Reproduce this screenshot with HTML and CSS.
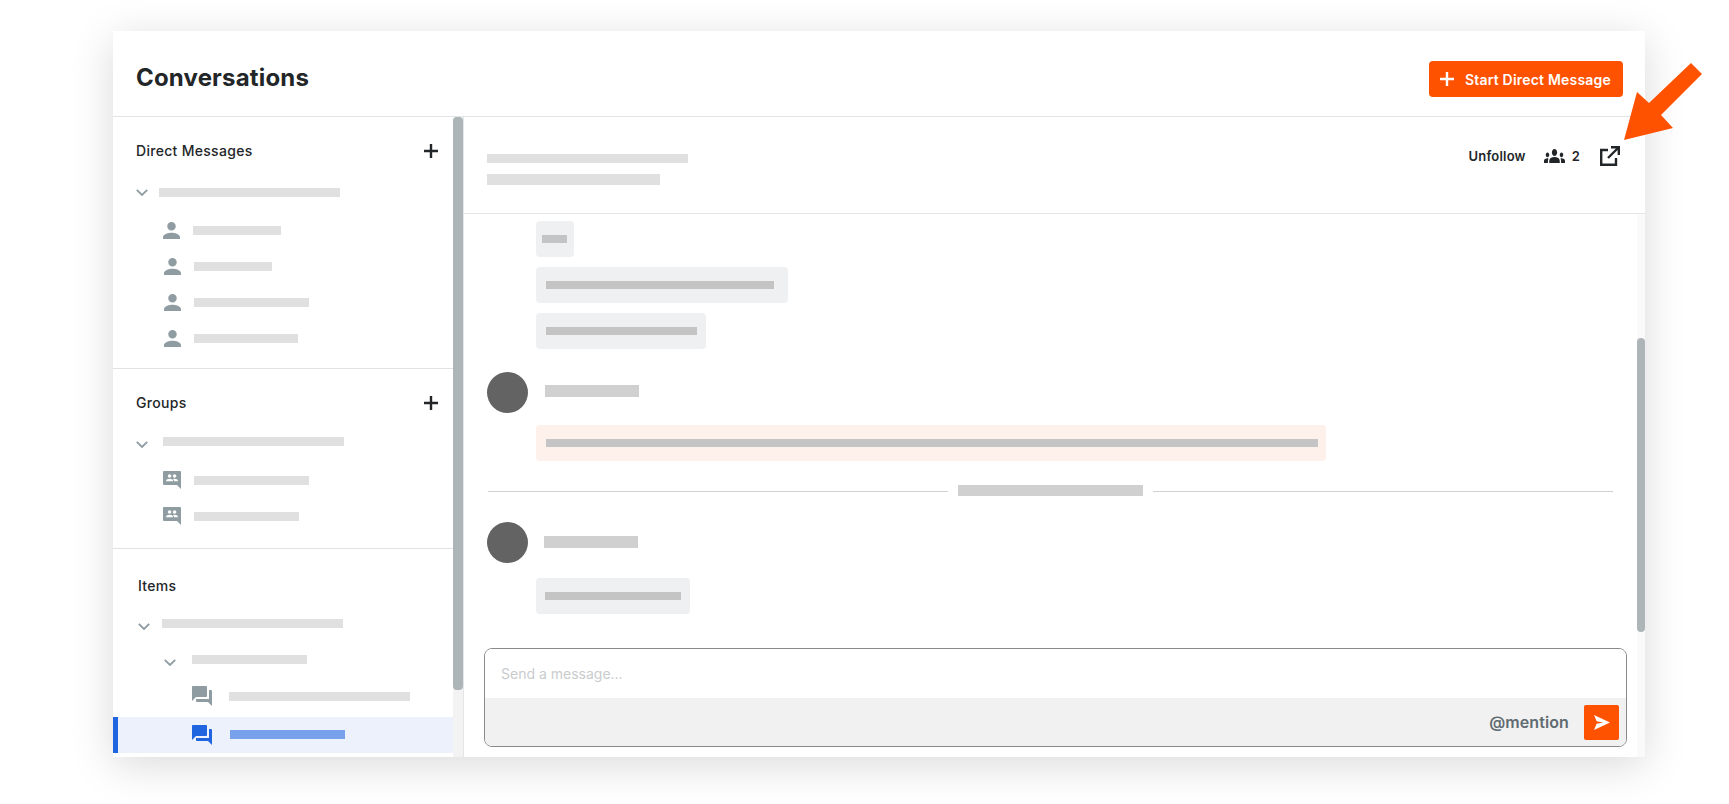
FILE: index.html
```html
<!DOCTYPE html>
<html lang="en">
<head>
    <meta charset="UTF-8">
    <meta name="viewport" content="width=device-width, initial-scale=1.0">
    <title>Conversations</title>
    <link rel="stylesheet" href="styles.css">
</head>
<body>
    <svg width="0" height="0" class="defs">
        <symbol id="chevron" viewBox="0 0 12 7"><path d="M.8.8 6 6l5.2-5.2" fill="none" stroke="currentColor" stroke-width="1.8"/></symbol>
        <symbol id="plus" viewBox="0 0 14 14"><path d="M7 0v14M0 7h14" fill="none" stroke="currentColor" stroke-width="2.4"/></symbol>
        <symbol id="person" viewBox="4 4 16 16"><path fill="currentColor" d="M12 12c2.21 0 4-1.79 4-4s-1.79-4-4-4-4 1.79-4 4 1.79 4 4 4zm0 2c-2.67 0-8 1.34-8 4v2h16v-2c0-2.66-5.33-4-8-4z"/></symbol>
        <symbol id="group-chat" viewBox="0 0 18 18">
            <path fill="currentColor" d="M1 0h16a1 1 0 0 1 1 1v17l-4-4H1a1 1 0 0 1-1-1V1a1 1 0 0 1 1-1z"/>
            <circle cx="6.6" cy="5" r="1.8" fill="#fff"/>
            <circle cx="11.6" cy="5" r="1.8" fill="#fff"/>
            <path fill="#fff" d="M3 10.2c0-1.6 2-2.4 3.6-2.4s3.5.8 3.5 2.4zM11 10.2c0-1-.4-1.8-1.1-2.3.6-.1 1.2-.2 1.8-.2 1.5 0 3.4.8 3.4 2.5z"/>
        </symbol>
        <symbol id="forum" viewBox="2 2 20 20"><path fill="currentColor" d="M21 6h-2v9H6v2c0 .55.45 1 1 1h11l4 4V7c0-.55-.45-1-1-1zm-4 6V3c0-.55-.45-1-1-1H3c-.55 0-1 .45-1 1v14l4-4h10c.55 0 1-.45 1-1z"/></symbol>
    </svg>

    <div class="card">
        <header class="top">
            <h1>Conversations</h1>
            <button class="btn-start">
                <svg class="btn-plus"><use href="#plus"/></svg>
                Start Direct Message
            </button>
        </header>

        <div class="main">
            <aside class="sidebar">
                <div class="side-list">
                    <section class="side-section dm">
                        <div class="side-head">
                            <h2>Direct Messages</h2>
                            <svg class="add"><use href="#plus"/></svg>
                        </div>
                        <div class="row row-parent">
                            <svg class="chev"><use href="#chevron"/></svg>
                            <span class="bar bar-side w181"></span>
                        </div>
                        <div class="row row-child row-first">
                            <svg class="ico-person"><use href="#person"/></svg>
                            <span class="bar bar-side w88"></span>
                        </div>
                        <div class="row row-child">
                            <svg class="ico-person"><use href="#person"/></svg>
                            <span class="bar bar-side w78"></span>
                        </div>
                        <div class="row row-child">
                            <svg class="ico-person"><use href="#person"/></svg>
                            <span class="bar bar-side w115"></span>
                        </div>
                        <div class="row row-child">
                            <svg class="ico-person"><use href="#person"/></svg>
                            <span class="bar bar-side w104"></span>
                        </div>
                    </section>

                    <section class="side-section groups">
                        <div class="side-head">
                            <h2>Groups</h2>
                            <svg class="add"><use href="#plus"/></svg>
                        </div>
                        <div class="row row-parent row-groups">
                            <svg class="chev chev-low"><use href="#chevron"/></svg>
                            <span class="bar bar-side w181"></span>
                        </div>
                        <div class="row row-child row-first">
                            <svg class="ico-group"><use href="#group-chat"/></svg>
                            <span class="bar bar-side w115"></span>
                        </div>
                        <div class="row row-child row-first">
                            <svg class="ico-group"><use href="#group-chat"/></svg>
                            <span class="bar bar-side w105"></span>
                        </div>
                    </section>

                    <section class="side-section items">
                        <div class="side-head">
                            <h2>Items</h2>
                        </div>
                        <div class="row row-item">
                            <svg class="chev chev-low"><use href="#chevron"/></svg>
                            <span class="bar bar-side w181"></span>
                        </div>
                        <div class="row row-sub">
                            <svg class="chev chev-low"><use href="#chevron"/></svg>
                            <span class="bar bar-side w115"></span>
                        </div>
                        <div class="row row-topic">
                            <svg class="ico-forum"><use href="#forum"/></svg>
                            <span class="bar bar-side w181"></span>
                        </div>
                        <div class="row row-topic active">
                            <svg class="ico-forum"><use href="#forum"/></svg>
                            <span class="bar bar-active w115"></span>
                        </div>
                    </section>
                </div>
                <div class="scroll scroll-side"><div class="thumb thumb-side"></div></div>
            </aside>

            <div class="pane">
                <div class="pane-head">
                    <div class="pane-title">
                        <span class="bar bar-title w201"></span>
                        <span class="bar bar-sub w173"></span>
                    </div>
                    <div class="pane-actions">
                        <span class="unfollow">Unfollow</span>
                        <svg class="ico-people" viewBox="0 6 24 12" preserveAspectRatio="none"><path fill="currentColor" d="M12 12.75c1.63 0 3.07.39 4.24.9 1.08.48 1.76 1.56 1.76 2.73V18H6v-1.61c0-1.18.68-2.26 1.76-2.73 1.17-.52 2.61-.91 4.24-.91zM4 13c1.1 0 2-.9 2-2s-.9-2-2-2-2 .9-2 2 .9 2 2 2zm1.13 1.1c-.37-.06-.74-.1-1.13-.1-.99 0-1.93.21-2.78.58C.48 14.9 0 15.62 0 16.43V18h4.5v-1.61c0-.83.23-1.61.63-2.29zM20 13c1.1 0 2-.9 2-2s-.9-2-2-2-2 .9-2 2 .9 2 2 2zm4 3.43c0-.81-.48-1.53-1.22-1.85-.85-.37-1.79-.58-2.78-.58-.39 0-.76.04-1.13.1.4.68.63 1.46.63 2.29V18H24v-1.57zM12 6c1.66 0 3 1.34 3 3s-1.34 3-3 3-3-1.34-3-3 1.34-3 3-3z"/></svg>
                        <span class="count">2</span>
                        <svg class="ico-open" viewBox="0 0 20 20"><path d="M8 4H1.2v14.8H16V12M8 12 18.5 1.5M11 1.2h7.8V9" fill="none" stroke="currentColor" stroke-width="2.4"/></svg>
                    </div>
                </div>

                <div class="pane-body">
                    <div class="thread">
                        <div class="bubble bubble-tiny"><span class="bar bar-msg w25"></span></div>
                        <div class="bubble bubble-next"><span class="bar bar-msg w228"></span></div>
                        <div class="bubble bubble-next bubble-short"><span class="bar bar-msg w151"></span></div>

                        <div class="msg-head msg-first">
                            <div class="avatar"></div>
                            <span class="bar bar-name"></span>
                        </div>
                        <div class="bubble bubble-new"><span class="bar bar-msg w772"></span></div>

                        <div class="date-line">
                            <span class="line"></span>
                            <span class="bar bar-date"></span>
                            <span class="line"></span>
                        </div>

                        <div class="msg-head msg-second">
                            <div class="avatar"></div>
                            <span class="bar bar-name"></span>
                        </div>
                        <div class="bubble bubble-last"><span class="bar bar-msg w136"></span></div>

                        <div class="composer">
                            <input class="composer-input" type="text" placeholder="Send a message...">
                            <div class="composer-foot">
                                <span class="mention">@mention</span>
                                <button class="btn-send">
                                    <svg viewBox="0 0 16 15"><path fill="#fff" d="M0 0l16 7.5L0 15l2.6-6.2 6.6-1.3-6.6-1.3z"/></svg>
                                </button>
                            </div>
                        </div>
                    </div>
                    <div class="scroll scroll-pane"><div class="thumb thumb-pane"></div></div>
                </div>
            </div>
        </div>
    </div>

    <svg class="arrow" viewBox="0 0 80 80"><polygon fill="#ff5200" points="67,1 78,12 37,53 49,66 0,78 13,30 25,41"/></svg>
</body>
</html>
```

FILE: styles.css
```css
* {
    box-sizing: border-box;
}
body {
    position: relative;
    margin: 0;
    height: 804px;
    padding: 31px 84px 0 113px;
    background-color: #fff;
    font-family: Inter, "Liberation Sans", sans-serif;
    color: #232628;
    overflow: hidden;
}
.defs {
    position: absolute;
}
.card {
    display: flex;
    flex-direction: column;
    height: 726px;
    background-color: #fff;
    box-shadow: 0 8px 40px rgba(0,0,0,0.15);
}

/* header */
.top {
    display: flex;
    align-items: center;
    justify-content: space-between;
    height: 86px;
    padding: 6px 22px 0 23px;
    border-bottom: 1px solid #e0e4e5;
}
h1 {
    margin: 0 0 -2px;
    font-size: 24px;
    font-weight: 700;
    line-height: 30px;
    letter-spacing: 0.17px;
}
.btn-start {
    display: flex;
    align-items: center;
    gap: 11px;
    height: 36px;
    margin-top: 5px;
    padding: 0 12px 0 11px;
    border: 0;
    border-radius: 4px;
    background-color: #ff5200;
    color: #fff;
    font-family: inherit;
    font-size: 14px;
    font-weight: 600;
    letter-spacing: 0.2px;
}
.btn-plus {
    width: 14px;
    height: 14px;
}

.main {
    display: flex;
    flex: 1;
    min-height: 0;
}

/* sidebar */
.sidebar {
    display: flex;
    width: 351px;
    border-right: 1px solid #e4e6e8;
}
.side-list {
    flex: 1;
    min-width: 0;
    overflow: hidden;
}
.side-section {
    border-bottom: 1px solid #e0e2e4;
}
.dm {
    height: 252px;
    padding-top: 20px;
}
.groups {
    height: 180px;
    padding-top: 20px;
}
.items {
    padding-top: 23px;
    border-bottom: 0;
}
.side-head {
    display: flex;
    align-items: center;
    justify-content: space-between;
    height: 28px;
    margin-bottom: 9px;
    padding: 0 15px 0 23px;
}
.groups .side-head {
    margin-bottom: 6px;
}
.items .side-head {
    margin-bottom: 5px;
    padding-left: 25px;
}
h2 {
    margin: 0 0 2px;
    font-size: 14px;
    font-weight: 500;
    letter-spacing: 0.3px;
}
.add {
    width: 14px;
    height: 14px;
}
.row {
    display: flex;
    align-items: center;
    height: 36px;
}
.row-parent {
    padding-left: 23px;
    gap: 11px;
    margin-bottom: 2px;
}
.row-groups {
    gap: 15px;
    margin-bottom: 3px;
}
.row-item {
    padding-left: 25px;
    gap: 12px;
}
.row-sub {
    padding-left: 51px;
    gap: 16px;
    margin-bottom: 1px;
}
.row-topic {
    padding-left: 79px;
    gap: 17px;
}
.row-child {
    padding-left: 51px;
    gap: 13px;
}
.row-first {
    padding-left: 50px;
}
.active {
    margin-top: 3px;
    background-color: #edf1fb;
    border-left: 5px solid #1f65e0;
    padding-left: 74px;
    gap: 18px;
    color: #1f65e0;
}
.chev {
    flex: none;
    width: 12px;
    height: 7px;
    margin-top: 1px;
    color: #8f9ca1;
}
.chev-low {
    margin-top: 7px;
}
.ico-person {
    flex: none;
    width: 17px;
    height: 17px;
    color: #8f9ca1;
}
.ico-group {
    flex: none;
    width: 18px;
    height: 18px;
    color: #8f9ca1;
}
.ico-forum {
    flex: none;
    width: 20px;
    height: 20px;
    color: #8f9ca1;
}
.active .ico-forum {
    color: #1f65e0;
}

/* skeleton bars */
.bar {
    display: block;
    flex: none;
    height: 9px;
}
.bar-side {
    background-color: #e0e0e0;
}
.bar-active {
    margin-bottom: 1px;
    background-color: #78a1ec;
}
.bar-title {
    background-color: #e0e0e0;
}
.bar-sub {
    height: 11px;
    margin-top: 11px;
    background-color: #e0e0e0;
}
.bar-msg {
    height: 8px;
    background-color: #c4c4c4;
}
.bar-name {
    width: 94px;
    height: 12px;
    background-color: #d0d0d0;
}
.bar-date {
    width: 185px;
    height: 11px;
    margin-bottom: 1px;
    background-color: #d0d0d0;
}
.w25 { width: 25px; }
.w78 { width: 78px; }
.w88 { width: 88px; }
.w104 { width: 104px; }
.w105 { width: 105px; }
.w115 { width: 115px; }
.w136 { width: 136px; }
.w151 { width: 151px; }
.w173 { width: 173px; }
.w181 { width: 181px; }
.w201 { width: 201px; }
.w228 { width: 228px; }
.w772 { width: 772px; }

/* scrollbars */
.scroll {
    flex: none;
    background-color: #f3f3f3;
}
.scroll-side {
    width: 10px;
}
.scroll-pane {
    width: 8px;
    padding-top: 124px;
    background-color: #fafafa;
}
.thumb {
    background-color: #adb5b8;
    border-radius: 4px;
}
.thumb-side {
    height: 573px;
}
.thumb-pane {
    height: 294px;
}

/* conversation */
.pane {
    display: flex;
    flex-direction: column;
    flex: 1;
    min-width: 0;
}
.pane-head {
    display: flex;
    justify-content: space-between;
    height: 97px;
    padding: 29px 25px 0 23px;
    border-bottom: 1px solid #e4e6e8;
}
.pane-title {
    margin-top: 8px;
}
.pane-actions {
    display: flex;
    align-items: center;
    height: 20px;
    font-size: 13px;
    font-weight: 600;
    letter-spacing: 0.2px;
}
.unfollow {
    margin-right: 18px;
}
.ico-people {
    width: 21px;
    height: 14px;
    margin-right: 7px;
}
.count {
    margin-right: 20px;
}
.ico-open {
    width: 20px;
    height: 20px;
}
.pane-body {
    display: flex;
    flex: 1;
    min-height: 0;
}
.thread {
    flex: 1;
    min-width: 0;
    padding: 7px 10px 0 20px;
}
.bubble {
    display: flex;
    align-items: center;
    width: 252px;
    height: 36px;
    margin-left: 52px;
    padding-left: 10px;
    background-color: #eff0f2;
    border-radius: 4px;
}
.bubble-tiny {
    width: 38px;
    padding-left: 6px;
}
.bubble-next {
    margin-top: 10px;
}
.bubble-short {
    width: 170px;
}
.bubble-new {
    width: 790px;
    margin-top: 12px;
    background-color: #fef0ea;
}
.bubble-last {
    width: 154px;
    margin-top: 15px;
    padding-left: 9px;
}
.msg-head {
    display: flex;
    align-items: center;
    gap: 17px;
    margin-left: 3px;
}
.msg-first {
    margin-top: 23px;
}
.msg-first .bar-name {
    margin-bottom: 3px;
}
.msg-second {
    margin-top: 25px;
    gap: 16px;
}
.msg-second .bar-name {
    margin-bottom: 1px;
}
.avatar {
    width: 41px;
    height: 41px;
    border-radius: 50%;
    background-color: #636363;
}
.date-line {
    display: flex;
    align-items: center;
    gap: 10px;
    margin: 24px 14px 0 4px;
    height: 12px;
}
.line {
    flex: 1;
    height: 1px;
    background-color: #cfd2d4;
}

/* composer */
.composer {
    display: flex;
    flex-direction: column;
    height: 99px;
    margin-top: 34px;
    border: 1px solid #8a8a8a;
    border-radius: 8px;
    overflow: hidden;
}
.composer-input {
    height: 49px;
    padding: 0 16px;
    border: 0;
    outline: 0;
    font-family: inherit;
    font-size: 14px;
}
.composer-input::placeholder {
    color: #c9cccd;
}
.composer-foot {
    display: flex;
    flex: 1;
    align-items: center;
    justify-content: flex-end;
    gap: 15px;
    padding-right: 7px;
    background-color: #f1f1f1;
}
.mention {
    color: #5f6b70;
    font-size: 16px;
    font-weight: 600;
    letter-spacing: 0.1px;
}
.btn-send {
    display: flex;
    align-items: center;
    justify-content: center;
    width: 35px;
    height: 35px;
    padding: 0;
    border: 0;
    border-radius: 2px;
    background-color: #ff5200;
}
.btn-send svg {
    width: 16px;
    height: 15px;
}

/* annotation */
.arrow {
    position: absolute;
    left: 1624px;
    top: 62px;
    width: 80px;
    height: 80px;
}
```
